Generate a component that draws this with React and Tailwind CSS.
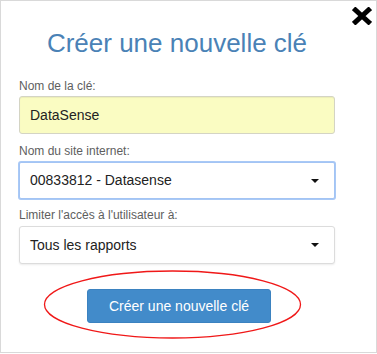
import React from "react";

function Caret() {
  return (
    <svg width="8" height="4" viewBox="0 0 8 4" className="shrink-0">
      <path d="M0 0 H8 L4 4 Z" fill="#111" />
    </svg>
  );
}

export default function App() {
  const font = { fontFamily: '"Liberation Sans", Arial, sans-serif' };
  return (
    <div className="w-[377px] h-[354px] bg-white" style={font}>
      <div className="relative w-[377px] h-[353px] border border-[#d9d9d9] bg-white pl-[18px] pt-[26px]">
        <svg
          className="absolute left-[351px] top-[6px]"
          width="20"
          height="18"
          viewBox="0 0 20 18"
        >
          <path d="M3.5 3 L16.5 15 M16.5 3 L3.5 15" stroke="#000" strokeWidth="5" strokeLinecap="square" />
        </svg>

        <div className="w-[316px]">
          <h1 className="text-center text-[26px] leading-[32px] text-[#4a82b6] font-normal">
            Créer une nouvelle clé
          </h1>

          <div className="mt-[19px] text-[12px] leading-[16px] text-[#5e5e5e]">Nom de la clé:</div>
          <div className="mt-[2px] h-[38px] flex items-center rounded-[3px] border border-[#d4d4c4] bg-[#fafcc2] pl-[10px] text-[14px] text-[#222] shadow-[inset_0_1px_1px_rgba(0,0,0,0.06)]">
            DataSense
          </div>

          <div className="mt-[9px] text-[12px] leading-[16px] text-[#5e5e5e]">Nom du site internet:</div>
          <div className="mt-[3px] h-[37px] flex items-center justify-between rounded-[2px] border border-[#a3c4f4] ring-1 ring-[#a9c9f6] bg-white pl-[10px] pr-[15px] text-[14px] text-[#222]">
            <span>00833812 - Datasense</span>
            <Caret />
          </div>

          <div className="mt-[8px] text-[12px] leading-[16px] text-[#5e5e5e]">Limiter l'accès à l'utilisateur à:</div>
          <div className="mt-[3px] h-[38px] flex items-center justify-between rounded-[3px] border border-[#dcdcdc] bg-white pl-[10px] pr-[15px] text-[14px] text-[#222] shadow-[0_1px_2px_rgba(0,0,0,0.08)]">
            <span>Tous les rapports</span>
            <Caret />
          </div>

          <button className="mt-[25px] ml-[68px] h-[34px] w-[184px] rounded-[3px] border border-[#3b82c0] bg-[#428bca] text-[14px] text-white">
            Créer une nouvelle clé
          </button>
        </div>

        <svg
          className="absolute left-[41px] top-[268px] pointer-events-none"
          width="261"
          height="71"
          viewBox="0 0 261 71"
        >
          <ellipse cx="130.5" cy="35.5" rx="128" ry="33.5" fill="none" stroke="#f01818" strokeWidth="1.3" />
        </svg>
      </div>
    </div>
  );
}
